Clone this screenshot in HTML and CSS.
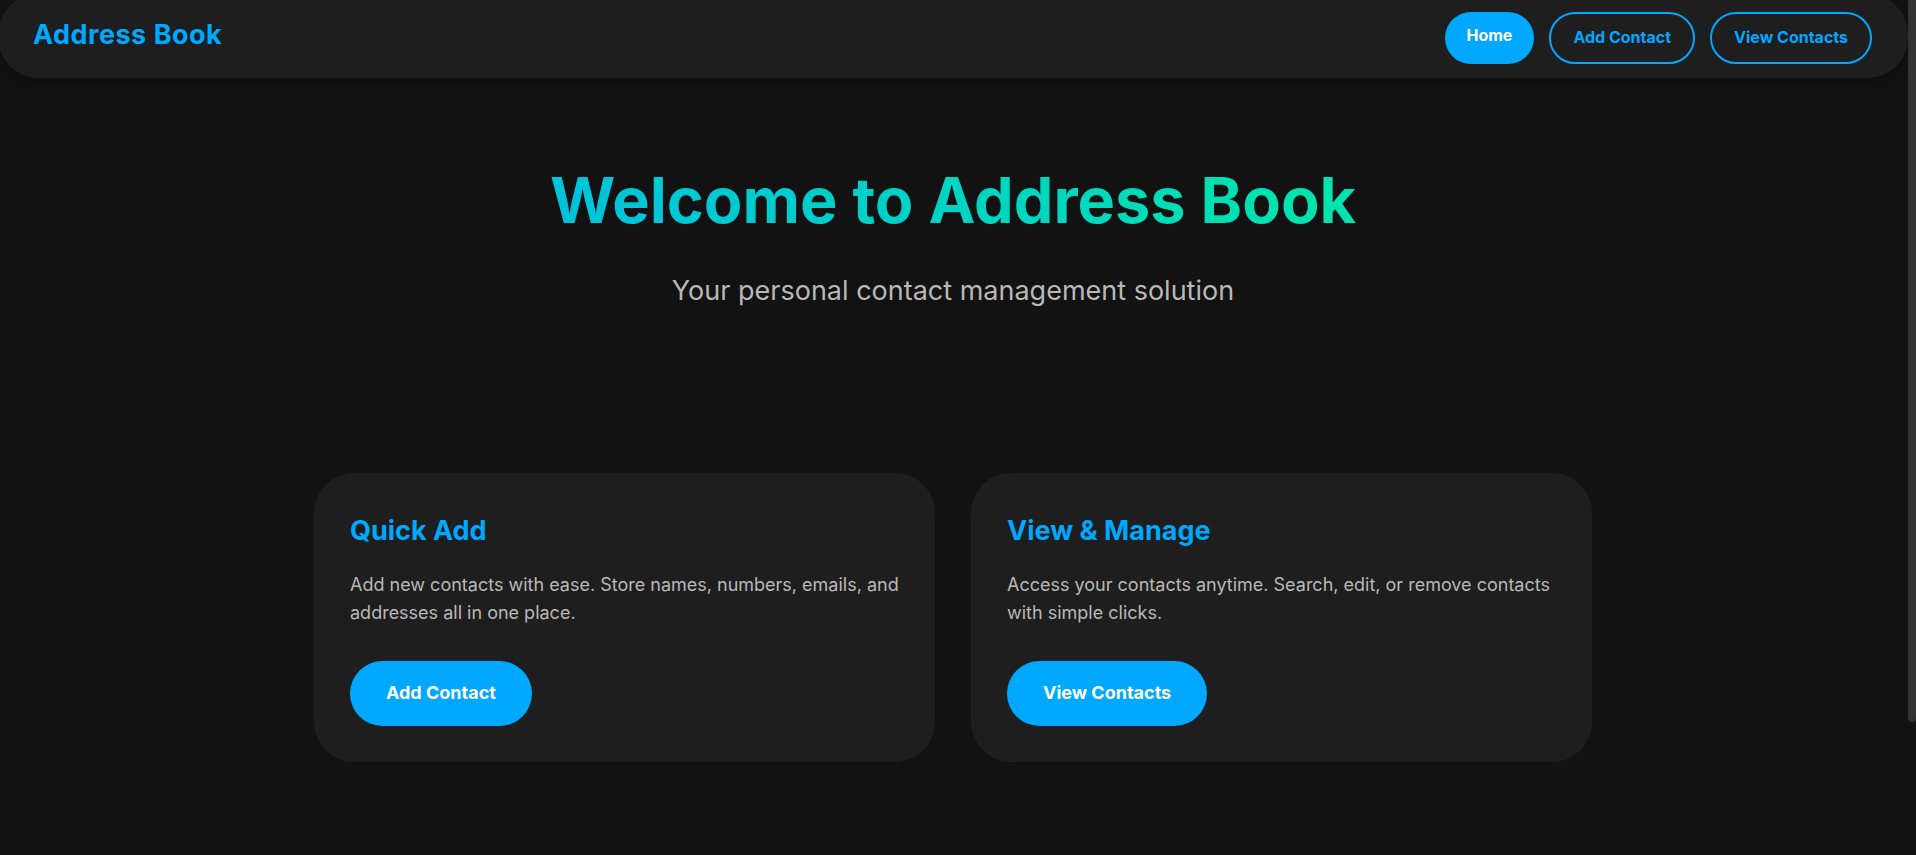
FILE: index.html
```html
<!DOCTYPE html>
<html lang="en">
<head>
<meta charset="utf-8">
<meta name="viewport" content="width=device-width, initial-scale=1">
<title>Address Book</title>
<link rel="stylesheet" href="styles.css">
</head>
<body>
<div class="page">
  <header class="navbar">
    <div class="logo">Address Book</div>
    <nav class="nav-links">
      <a class="nav-link active" href="#home">Home</a>
      <a class="nav-link" href="#add">Add Contact</a>
      <a class="nav-link" href="#contacts">View Contacts</a>
    </nav>
  </header>
  <main>
    <section class="hero">
      <h1 class="hero-title">Welcome to Address Book</h1>
      <p class="hero-text">Your personal contact management solution</p>
    </section>
    <section class="features">
      <article class="card">
        <h2 class="card-title">Quick Add</h2>
        <p class="card-text">Add new contacts with ease. Store names, numbers, emails, and addresses all in one place.</p>
        <a class="button" href="#add">Add Contact</a>
      </article>
      <article class="card">
        <h2 class="card-title">View &amp; Manage</h2>
        <p class="card-text">Access your contacts anytime. Search, edit, or remove contacts with simple clicks.</p>
        <a class="button" href="#contacts">View Contacts</a>
      </article>
    </section>
  </main>
</div>
<div class="scrollbar"><div class="scrollbar-thumb"></div></div>
</body>
</html>
```
FILE: styles.css
```css
* {
  box-sizing: border-box;
  margin: 0;
  padding: 0;
}

body {
  display: grid;
  grid-template-columns: 1fr 8px;
  height: 100vh;
  overflow: hidden;
  background: #121212;
  color: #b8b8b8;
  font-family: Inter, "Liberation Sans", sans-serif;
  line-height: 1.6;
}

.page {
  margin-left: -2px;
}

.navbar {
  display: flex;
  justify-content: space-between;
  margin-top: -6px;
  padding: 18px 36px 14px 35px;
  border-radius: 40px;
  background: #1e1e1e;
  box-shadow: 0 4px 12px rgba(0, 0, 0, 0.3);
}

.logo {
  color: #00a8ff;
  font-size: 27px;
  font-weight: 700;
  line-height: 45px;
  letter-spacing: 0.5px;
}

.nav-links {
  display: flex;
  gap: 15px;
}

.nav-link {
  padding: 11px 22px;
  border: 2px solid #00a8ff;
  border-radius: 26px;
  color: #00a8ff;
  font-size: 16px;
  font-weight: 700;
  text-decoration: none;
}

.nav-link.active {
  border: 0;
  background: #00a8ff;
  color: #fff;
}

.hero {
  padding: 72px 0 160px;
  text-align: center;
}

.hero-title {
  margin-bottom: 19px;
  background: linear-gradient(45deg, #00a8ff, #00ff88);
  background-clip: text;
  -webkit-background-clip: text;
  color: transparent;
  font-size: 63px;
  font-weight: 700;
}

.hero-text {
  font-size: 27px;
  line-height: 44px;
}

.features {
  display: grid;
  grid-template-columns: 1fr 1fr;
  gap: 36px;
  max-width: 1350px;
  margin: 0 auto;
  padding: 0 36px;
}

.card {
  padding: 36px;
  border-radius: 40px;
  background: #1e1e1e;
}

.card-title {
  margin-bottom: 18px;
  color: #00a8ff;
  font-size: 27px;
  font-weight: 700;
}

.card-text {
  margin-bottom: 33px;
  font-size: 18px;
}

.button {
  display: inline-block;
  padding: 18px 36px;
  border-radius: 36px;
  background: #00a8ff;
  color: #fff;
  font-size: 18px;
  font-weight: 700;
  text-decoration: none;
}

.scrollbar-thumb {
  height: 84.4%;
  border-radius: 0 0 4px 4px;
  background: #333;
}
```
